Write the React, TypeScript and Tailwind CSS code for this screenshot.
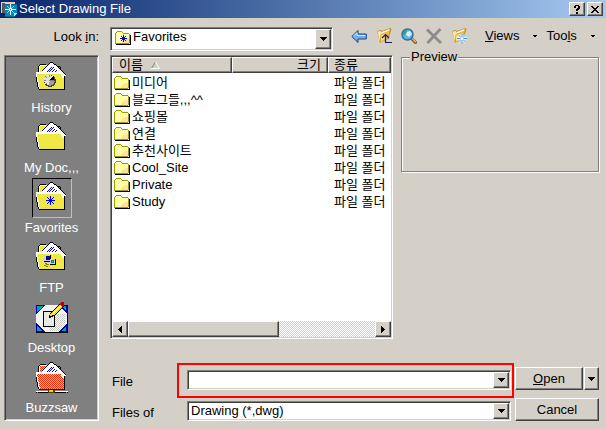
import React, { FC, ReactNode, useId, useState } from 'react'

const SUNKEN = 'border border-[#808080] border-r-white border-b-white p-px shadow-[inset_1px_1px_0_#404040,inset_-1px_-1px_0_#d4d0c8]'
const RAISED = 'border border-white border-r-[#404040] border-b-[#404040] bg-[#d4d0c8] shadow-[inset_-1px_-1px_0_#808080]'

interface IFolder {
  name: string
  type: string
}

const folders: IFolder[] = [
  { name: '미디어', type: '파일 폴더' },
  { name: '블로그들,,,^^', type: '파일 폴더' },
  { name: '쇼핑몰', type: '파일 폴더' },
  { name: '연결', type: '파일 폴더' },
  { name: '추천사이트', type: '파일 폴더' },
  { name: 'Cool_Site', type: '파일 폴더' },
  { name: 'Private', type: '파일 폴더' },
  { name: 'Study', type: '파일 폴더' }
]

const DownArrow = () => (
  <svg width="7" height="4" viewBox="0 0 7 4" shapeRendering="crispEdges" aria-hidden="true">
    <path d="M0 0h7v1H0zM1 1h5v1H1zM2 2h3v1H2zM3 3h1v1H3z" fill="#000" />
  </svg>
)

const SideArrow = ({ right }: { right?: boolean }) => (
  <svg width="4" height="7" viewBox="0 0 4 7" shapeRendering="crispEdges" aria-hidden="true">
    <path d={right ? 'M0 0h1v7H0zM1 1h1v5H1zM2 2h1v3H2zM3 3h1v1H3z' : 'M3 0h1v7H3zM2 1h1v5H2zM1 2h1v3H1zM0 3h1v1H0z'} fill="#000" />
  </svg>
)

const SmallFolder = ({ star }: { star?: boolean }) => (
  <svg width="16" height="16" viewBox="0 0 16 16" shapeRendering="crispEdges" aria-hidden="true">
    <path d="M1 3h1V2h5v1h1v1h6v9H1z" fill="#ffffa8" />
    <path d="M7 11h1v-1h1V9h2V8h3v5H7z" fill="#ffe09c" />
    <path d="M2 1h5v1H2zM1 2h1v1H1zM7 2h1v1H7zM8 3h6v1H8zM0 3h1v10H0zM0 13h14v1H0zM14 4h1v9h-1z" fill="#9c9c00" />
    <path d="M1 14h14v1H1zM15 5h1v10h-1z" fill="#000" />
    {star && <path d="M8 5h1v7H8zM5 8h7v1H5zM6 6h1v1H6zM10 6h1v1h-1zM7 7h1v1H7zM9 7h1v1H9zM7 9h1v1H7zM9 9h1v1H9zM6 10h1v1H6zM10 10h1v1h-1z" fill="#00f" />}
  </svg>
)

interface BigFolderProps {
  color?: string
  base?: string
  children?: ReactNode
}

const BigFolder: FC<BigFolderProps> = ({ color = '#ece440', base = '#dcdcd0', children }) => {
  const id = useId()
  return (
    <svg width="32" height="32" viewBox="0 0 32 32" shapeRendering="crispEdges" aria-hidden="true">
      <defs>
        <pattern id={id} width="2" height="2" patternUnits="userSpaceOnUse">
          <rect width="2" height="2" fill={base} />
          <path d="M0 0h1v1H0zM1 1h1v1H1z" fill={color} />
        </pattern>
      </defs>
      <path d="M2 12V5l3-2h8v2h10l4 6v3z" fill={`url(#${id})`} />
      <path d="M4 2h6v1H4zM3 3h1v1H3zM2 4h1v6H2zM21 4h3v1h-3zM24 5h1v2h-1z" fill="#000" />
      <path d="M4 3h6v1H4zM3 4h1v6H3z" fill="#fff" />
      <path d="M4 11L14 1h3l12 12-2 3-3-5z" fill="#fff" />
      <path
        d="M14 0h3v1h-3zM13 1h1v1h-1zM12 2h1v1h-1zM11 3h1v1h-1zM10 4h1v1h-1zM9 5h1v1H9zM8 6h1v1H8zM7 7h1v1H7zM6 8h1v1H6zM17 1h1v1h-1zM18 2h2v1h-2zM20 3h1v1h-1zM21 4h1v1h-1zM22 5h1v1h-1zM23 6h1v1h-1zM24 7h1v1h-1zM25 8h1v1h-1zM26 9h1v1h-1zM27 10h1v1h-1zM28 11h1v1h-1zM29 12h1v2h-1z"
        fill="#000"
      />
      <path d="M15 5h1v1h-1zM14 6h1v1h-1zM13 7h1v1h-1zM12 8h1v1h-1zM11 9h1v1h-1zM17 5h1v1h-1zM16 6h1v1h-1zM15 7h1v1h-1zM14 8h1v1h-1zM13 9h1v1h-1zM18 7h1v1h-1zM17 8h1v1h-1zM16 9h1v1h-1zM20 8h1v1h-1zM19 9h1v1h-1z" fill="#0000e0" />
      <path d="M0 11h26v4h3v12H4v-2H3v-5H2v-5H1v-3H0z" fill={`url(#${id})`} />
      <path d="M0 10h25v1h1v1H1v3H0zM1 15h1v5H1zM2 20h1v5H2zM3 25h1v2H3z" fill="#fff" />
      <path d="M0 15h1v5H0zM1 20h1v5H1zM2 25h1v2H2zM3 27h26v1H3zM28 14h1v13h-1z" fill="#000" />
      <path d="M25 11h2v1h2v1h1v1h-2v2h-2z" fill="#fff" />
      {children}
    </svg>
  )
}

const HistoryIcon = () => (
  <BigFolder>
    <circle cx="14" cy="19" r="6" fill="#404040" />
    <circle cx="13" cy="18" r="5" fill="#e0e0e0" />
    <path d="M13 18l5-4v4z" fill="#000" />
    <path d="M13 13h1v2h-1zM8 18h2v1H8zM13 22h1v1h-1zM9 14h1v1H9zM10 15h1v1h-1zM10 21h1v1h-1zM13 18h5v1h-5z" fill="#808080" />
    <path d="M14 19h5v1h-1v2h-1v1h-2v1h-2v-2z" fill="#a0a0a0" />
  </BigFolder>
)

const FavoritesIcon = () => (
  <BigFolder>
    <path d="M14 14h1v9h-1zM10 18h9v1h-9zM11 15h1v1h-1zM12 16h1v1h-1zM13 17h1v1h-1zM15 17h1v1h-1zM16 16h1v1h-1zM17 15h1v1h-1zM13 19h1v1h-1zM12 20h1v1h-1zM11 21h1v1h-1zM15 19h1v1h-1zM16 20h1v1h-1zM17 21h1v1h-1z" fill="#0000e8" />
  </BigFolder>
)

const FtpIcon = () => (
  <BigFolder>
    <path d="M8 13h7v7H8zM14 17h6v7h-6z" fill="#000" />
    <path d="M8 13h6v6H8zM14 17h5v5h-5z" fill="#d0d0d0" />
    <path d="M10 14h4v4h-4z" fill="#0000a0" />
    <path d="M15 18h3v3h-3z" fill="#008080" />
    <path d="M16 19h1v1h-1z" fill="#0ff" />
    <path d="M8 20h6v1H8zM13 23h7v1h-7z" fill="#d0d0d0" />
    <path d="M9 21h2v1H9zM10 22h3v1h-3zM8 23h2v1H8zM10 24h2v1h-2z" fill="#808000" />
  </BigFolder>
)

const DesktopIcon = () => {
  const id = useId()
  return (
    <svg width="32" height="32" viewBox="0 0 32 32" shapeRendering="crispEdges" aria-hidden="true">
      <defs>
        <pattern id={id} width="2" height="2" patternUnits="userSpaceOnUse">
          <rect width="2" height="2" fill="#fff" />
          <path d="M0 0h1v1H0zM1 1h1v1H1z" fill="#c8c8c8" />
        </pattern>
      </defs>
      <path d="M0 3h32v28H0z" fill="#000" />
      <path d="M0 3h31v27H0z" fill="#f4f4f4" />
      <path d="M13 12h16v11l-6 6H13z" fill={`url(#${id})`} />
      <path d="M0 3h9L0 12zM31 3h-9l9 9zM0 30v-9l9 9zM31 30v-9l-9 9z" fill="#0000b0" />
      <path d="M1 4h6L1 10zM30 4h-4l4 5zM1 29v-5l5 5zM30 29v-4l-5 4z" fill="#00a0b0" />
      <path d="M7 9h12v16H7z" fill="#000" />
      <path d="M8 10h10v14H8z" fill="#e8e8e8" />
      <path d="M13 16l1-5L24 1l4 4-10 9-4 2z" fill="#000" />
      <path d="M14 14l1-3 9-8 3 2-9 8z" fill="#f0e000" />
      <path d="M15 12l9-9 1 1-9 9z" fill="#fff890" />
      <path d="M24 2l1-2h3v3l-2 2z" fill="#c00000" />
    </svg>
  )
}

const BuzzsawIcon = () => (
  <BigFolder color="#f42800" base="#ffd848">
    <path d="M0 29h12v1H0zM18 29h14v1H18z" fill="#fff" />
    <path d="M0 30h1v1H0zM2 30h10v1H2zM19 30h11v1H19zM31 30h1v1h-1zM14 27h3v1h-3z" fill="#000" />
    <path d="M12 28h7v3h-7z" fill="#404000" />
    <path d="M13 28h4v2h-4z" fill="#e8d800" />
  </BigFolder>
)

const places = [
  { name: 'History', icon: <HistoryIcon /> },
  { name: 'My Doc,,,', icon: <BigFolder /> },
  { name: 'Favorites', icon: <FavoritesIcon /> },
  { name: 'FTP', icon: <FtpIcon /> },
  { name: 'Desktop', icon: <DesktopIcon /> },
  { name: 'Buzzsaw', icon: <BuzzsawIcon /> }
]

const TitleIcon = () => (
  <svg width="17" height="16" viewBox="0 0 17 16" shapeRendering="crispEdges" aria-hidden="true">
    <path d="M0 1h14v11H0z" fill="#d8d4cc" />
    <path d="M1 2h3v10H1z" fill="#605850" />
    <path d="M2 3h14v10l-3 3H4V3z" fill="#006890" />
    <path d="M4 4h12v8l-3 3H4z" fill="#0088b8" />
    <path d="M9 3h1v4H9zM9 10h1v4H9zM4 8h4v1H4zM11 8h4v1h-4zM8 7h3v1H8zM8 9h3v1H8zM8 8h1v1H8zM10 8h1v1h-1z" fill="#fff" />
    <path d="M6 5h1v1H6zM12 5h1v1h-1zM6 11h1v1H6zM12 11h1v1h-1zM7 6h1v1H7zM11 6h1v1h-1zM7 10h1v1H7zM11 10h1v1h-1z" fill="#90d8f0" />
    <path d="M13 12h3l-3 3z" fill="#b0e8f8" />
  </svg>
)

const BackIcon = () => (
  <svg width="16" height="16" viewBox="0 0 16 16" aria-hidden="true">
    <path d="M.8 8.500L7 2.500V6h8.300v5H7v3.500z" fill="#70b0f0" stroke="#204078" strokeLinejoin="round" />
    <path d="M2.500 8L6 4.800V7.500h8.500" fill="none" stroke="#c8e8ff" />
  </svg>
)

const OpenFolder = ({ children }: { children: ReactNode }) => (
  <svg width="16" height="16" viewBox="0 0 16 16" aria-hidden="true">
    <path d="M1 3l4-1 1 1 8-3 1.500 1-3 10-6 2.500L4 15z" fill="#c08c1c" />
    <path d="M1.500 3.500L5 3l.5 1.500L3.500 13z" fill="#f8e8a8" />
    <path d="M5.500 4L14 .8 13 3 5 6z" fill="#fff8dc" />
    <path d="M4.500 6.500l9.500-4-2.500 8.500-7 3.500z" fill="#e8bc48" />
    <path d="M5.500 7.500l5-2-2 5.500-3.500 2z" fill="#fae49c" />
    {children}
  </svg>
)

const UpIcon = () => (
  <OpenFolder>
    <path d="M9.500 7v7.500H16M6 10l3.500-3.500L13 10" fill="none" stroke="#102060" strokeWidth="1.200" />
  </OpenFolder>
)

const NewFolderIcon = () => (
  <OpenFolder>
    <path d="M11 6v10M6 10.500h10M7.500 7l7 7M14.500 7l-7 7" stroke="#fff" strokeWidth="2" />
    <path d="M11 6v10M6 10.500h10M7.500 7l7 7M14.500 7l-7 7" stroke="#4090dc" />
    <circle cx="11" cy="10.500" r="1.600" fill="#fff" />
  </OpenFolder>
)

const SearchIcon = () => (
  <svg width="16" height="16" viewBox="0 0 16 16" aria-hidden="true">
    <path d="M10 10l4.500 4.500" stroke="#805028" strokeWidth="3" strokeLinecap="round" />
    <path d="M10 9.500l4.500 4.500" stroke="#e8b870" strokeWidth="1.200" strokeLinecap="round" />
    <circle cx="6.500" cy="6.500" r="5.500" fill="#58b8e8" stroke="#3068a8" strokeWidth="1.400" />
    <path d="M2 6c0-3 2-4.500 4-4.500L5 5 3 8z" fill="#38a858" />
    <path d="M6 4l3-1 2 3-3 3-3-2z" fill="#d0f4ff" />
  </svg>
)

const DeleteIcon = () => (
  <svg width="16" height="16" viewBox="0 0 16 16" aria-hidden="true">
    <path d="M1 1.500L15 15M14.500 1L1.500 15" stroke="#8c8c8c" strokeWidth="2.800" />
  </svg>
)

const tools = [
  { name: 'Back', icon: <BackIcon /> },
  { name: 'Up one level', icon: <UpIcon /> },
  { name: 'Search the Web', icon: <SearchIcon /> },
  { name: 'Delete', icon: <DeleteIcon /> },
  { name: 'Create New Folder', icon: <NewFolderIcon /> }
]

const TitleBar = () => (
  <header className="flex h-[18px] items-center gap-px bg-linear-to-r from-[#0a246a] to-[#a6caf0] pr-[3px] pl-px text-white">
    <TitleIcon />
    <h1 className="flex-1 leading-4">Select Drawing File</h1>
    <div className="flex gap-0.5">
      <button type="button" aria-label="Help" className={`${RAISED} flex h-[14px] w-4 items-center justify-center`}>
        <svg width="6" height="9" viewBox="0 0 6 9" shapeRendering="crispEdges" aria-hidden="true">
          <path d="M1 0h4v1h1v3H5v1H4v1H2V4h1V3h1V1H2v2H0V1h1zM2 7h2v2H2z" fill="#000" />
        </svg>
      </button>
      <button type="button" aria-label="Close" className={`${RAISED} flex h-[14px] w-4 items-center justify-center`}>
        <svg width="8" height="7" viewBox="0 0 8 7" shapeRendering="crispEdges" aria-hidden="true">
          <path d="M0 0h2v1h1v1h2V1h1V0h2v1H7v1H6v1H5v1h1v1h1v1h1v1H6V6H5V5H3v1H2v1H0V6h1V5h1V4h1V3H2V2H1V1H0z" fill="#000" />
        </svg>
      </button>
    </div>
  </header>
)

interface DropDownProps {
  id: string
  options: string[]
  icon?: ReactNode
  className: string
  selectClass: string
}

const DropDown: FC<DropDownProps> = ({ id, options, icon, className, selectClass }) => (
  <div className={`${SUNKEN} relative flex bg-white ${className}`}>
    {icon && <span className="pointer-events-none absolute top-0.5 left-1">{icon}</span>}
    <select id={id} className={`min-w-0 flex-1 appearance-none bg-transparent outline-none ${selectClass}`}>
      {options.map((item) => (
        <option key={item}>{item}</option>
      ))}
    </select>
    <span className={`${RAISED} pointer-events-none absolute inset-y-px right-px flex w-4 items-center justify-center`}>
      <DownArrow />
    </span>
  </div>
)

const FileList = () => (
  <div className={`${SUNKEN} flex min-w-0 flex-1 flex-col bg-white`}>
    <div className="flex-1">
      <table className="w-full table-fixed border-collapse">
        <thead>
          <tr>
            <th className="w-[120px] p-0 font-normal">
              <button type="button" className={`${RAISED} flex h-4 w-full items-center gap-2 pl-[6px] leading-[14px]`}>
                이름
                <svg width="9" height="7" viewBox="0 0 9 7" aria-hidden="true">
                  <path d="M4.500 0L0 7" stroke="#808080" />
                  <path d="M4.500 0l4 6.500H0" fill="none" stroke="#fff" />
                </svg>
              </button>
            </th>
            <th className="w-24 p-0 font-normal">
              <button type="button" className={`${RAISED} flex h-4 w-full items-center justify-end pr-[6px] leading-[14px]`}>
                크기
              </button>
            </th>
            <th className="p-0 font-normal">
              <button type="button" className={`${RAISED} flex h-4 w-full items-center pl-[5px] leading-[14px]`}>
                종류
              </button>
            </th>
          </tr>
        </thead>
        <tbody>
          <tr className="h-px" aria-hidden="true" />
          {folders.map((item) => (
            <tr key={item.name} className="h-[17px] leading-[17px]">
              <td className="p-0 pl-0.5">
                <div className="flex items-center gap-0.5">
                  <SmallFolder />
                  {item.name}
                </div>
              </td>
              <td className="p-0" />
              <td className="p-0 pl-[6px] whitespace-nowrap">{item.type}</td>
            </tr>
          ))}
        </tbody>
      </table>
    </div>
    <div className="flex h-4 bg-[repeating-conic-gradient(#ffffff_0_25%,#d4d0c8_0_50%)] bg-size-[2px_2px]">
      <button type="button" aria-label="Scroll left" className={`${RAISED} flex w-4 items-center justify-center`}>
        <SideArrow />
      </button>
      <div className="flex flex-1">
        <div className={`${RAISED} w-[61%]`} />
      </div>
      <button type="button" aria-label="Scroll right" className={`${RAISED} flex w-4 items-center justify-center`}>
        <SideArrow right />
      </button>
    </div>
  </div>
)

const App = () => {
  const [place, setPlace] = useState('Favorites')
  const [fileName, setFileName] = useState('')

  return (
    <div className="flex min-h-screen flex-col bg-[#d4d0c8] font-['Liberation_Sans','Noto_Sans_CJK_KR',sans-serif] text-[13px] text-black">
      <TitleBar />
      <main className="flex flex-1 gap-[11px] pr-[7px] pb-2 pl-1">
        <div className="flex w-[95px] flex-col">
          <label htmlFor="look-in" className="h-[37px] text-right leading-[38px]">
            Look <u>i</u>n:
          </label>
          <nav className={`${SUNKEN} flex flex-1 flex-col bg-[#808080] pt-0.5 text-white`}>
            {places.map((item) => (
              <button key={item.name} type="button" onClick={() => setPlace(item.name)} className="flex flex-col items-center">
                <span className={`border p-[3px] ${place === item.name ? 'border-black border-r-[#c0c0c0] border-b-[#c0c0c0]' : 'border-transparent'}`}>{item.icon}</span>
                <span className="leading-5">{item.name}</span>
              </button>
            ))}
          </nav>
        </div>

        <div className="flex min-w-0 flex-1 flex-col">
          <div className="flex h-[37px] pt-[9px]">
            <DropDown id="look-in" options={['Favorites']} icon={<SmallFolder star />} className="h-6 flex-1" selectClass="pl-[21px] leading-4 pb-1" />
            <div className="flex h-[18px] w-[266px] items-center gap-[9px] pl-[18px]">
              {tools.map((item) => (
                <button key={item.name} type="button" aria-label={item.name}>
                  {item.icon}
                </button>
              ))}
              <button type="button" className="ml-[9px] flex items-center gap-[14px] leading-4">
                <span>
                  <u>V</u>iews
                </span>
                <svg width="4" height="2" viewBox="0 0 4 2" shapeRendering="crispEdges" aria-hidden="true">
                  <path d="M0 0h4v1H0zM1 1h2v1H1z" />
                </svg>
              </button>
              <button type="button" className="flex items-center gap-[14px] leading-4">
                <span>
                  Too<u>l</u>s
                </span>
                <svg width="4" height="2" viewBox="0 0 4 2" shapeRendering="crispEdges" aria-hidden="true">
                  <path d="M0 0h4v1H0zM1 1h2v1H1z" />
                </svg>
              </button>
            </div>
          </div>

          <div className="flex flex-1 items-stretch gap-2">
            <FileList />
            <fieldset className="h-[117px] w-[198px] border border-[#808080] pl-2 shadow-[1px_1px_0_#fff,inset_1px_1px_0_#fff]">
              <legend className="bg-[#d4d0c8] px-px leading-1">Preview</legend>
            </fieldset>
          </div>

          <form className="flex items-end gap-1 pt-7" onSubmit={(e) => e.preventDefault()}>
            <div className="flex min-w-0 flex-1 flex-col gap-[11px]">
              <div className="flex h-5 items-center">
                <label htmlFor="file-name" className="w-[77px] pt-1 pl-0.5">
                  File
                </label>
                <div className={`${SUNKEN} relative flex min-w-0 flex-1 self-stretch bg-white`}>
                  <input id="file-name" type="text" value={fileName} onChange={(e) => setFileName(e.target.value)} className="min-w-0 flex-1 px-1 leading-4 outline-none" />
                  <button type="button" aria-label="Recent files" className={`${RAISED} flex w-4 items-center justify-center`}>
                    <DownArrow />
                  </button>
                  <span className="pointer-events-none absolute -top-2 -right-1 -bottom-[9px] -left-[11px] border-2 border-[#f00]" />
                </div>
              </div>
              <div className="flex h-5 items-center">
                <label htmlFor="file-type" className="w-[77px] pt-1 pl-0.5">
                  Files of
                </label>
                <DropDown id="file-type" options={['Drawing (*,dwg)']} className="min-w-0 flex-1 self-stretch" selectClass="pl-0.5 leading-4" />
              </div>
            </div>
            <div className="flex w-[84px] flex-col gap-2">
              <div className="flex h-[23px] gap-px">
                <button type="submit" className={`${RAISED} flex-1 leading-4`}>
                  <u>O</u>pen
                </button>
                <button type="button" aria-label="Open options" className={`${RAISED} flex w-[15px] items-center justify-center`}>
                  <DownArrow />
                </button>
              </div>
              <button type="button" className={`${RAISED} h-[23px] leading-4`}>
                Cancel
              </button>
            </div>
          </form>
        </div>
      </main>
    </div>
  )
}

export default App
